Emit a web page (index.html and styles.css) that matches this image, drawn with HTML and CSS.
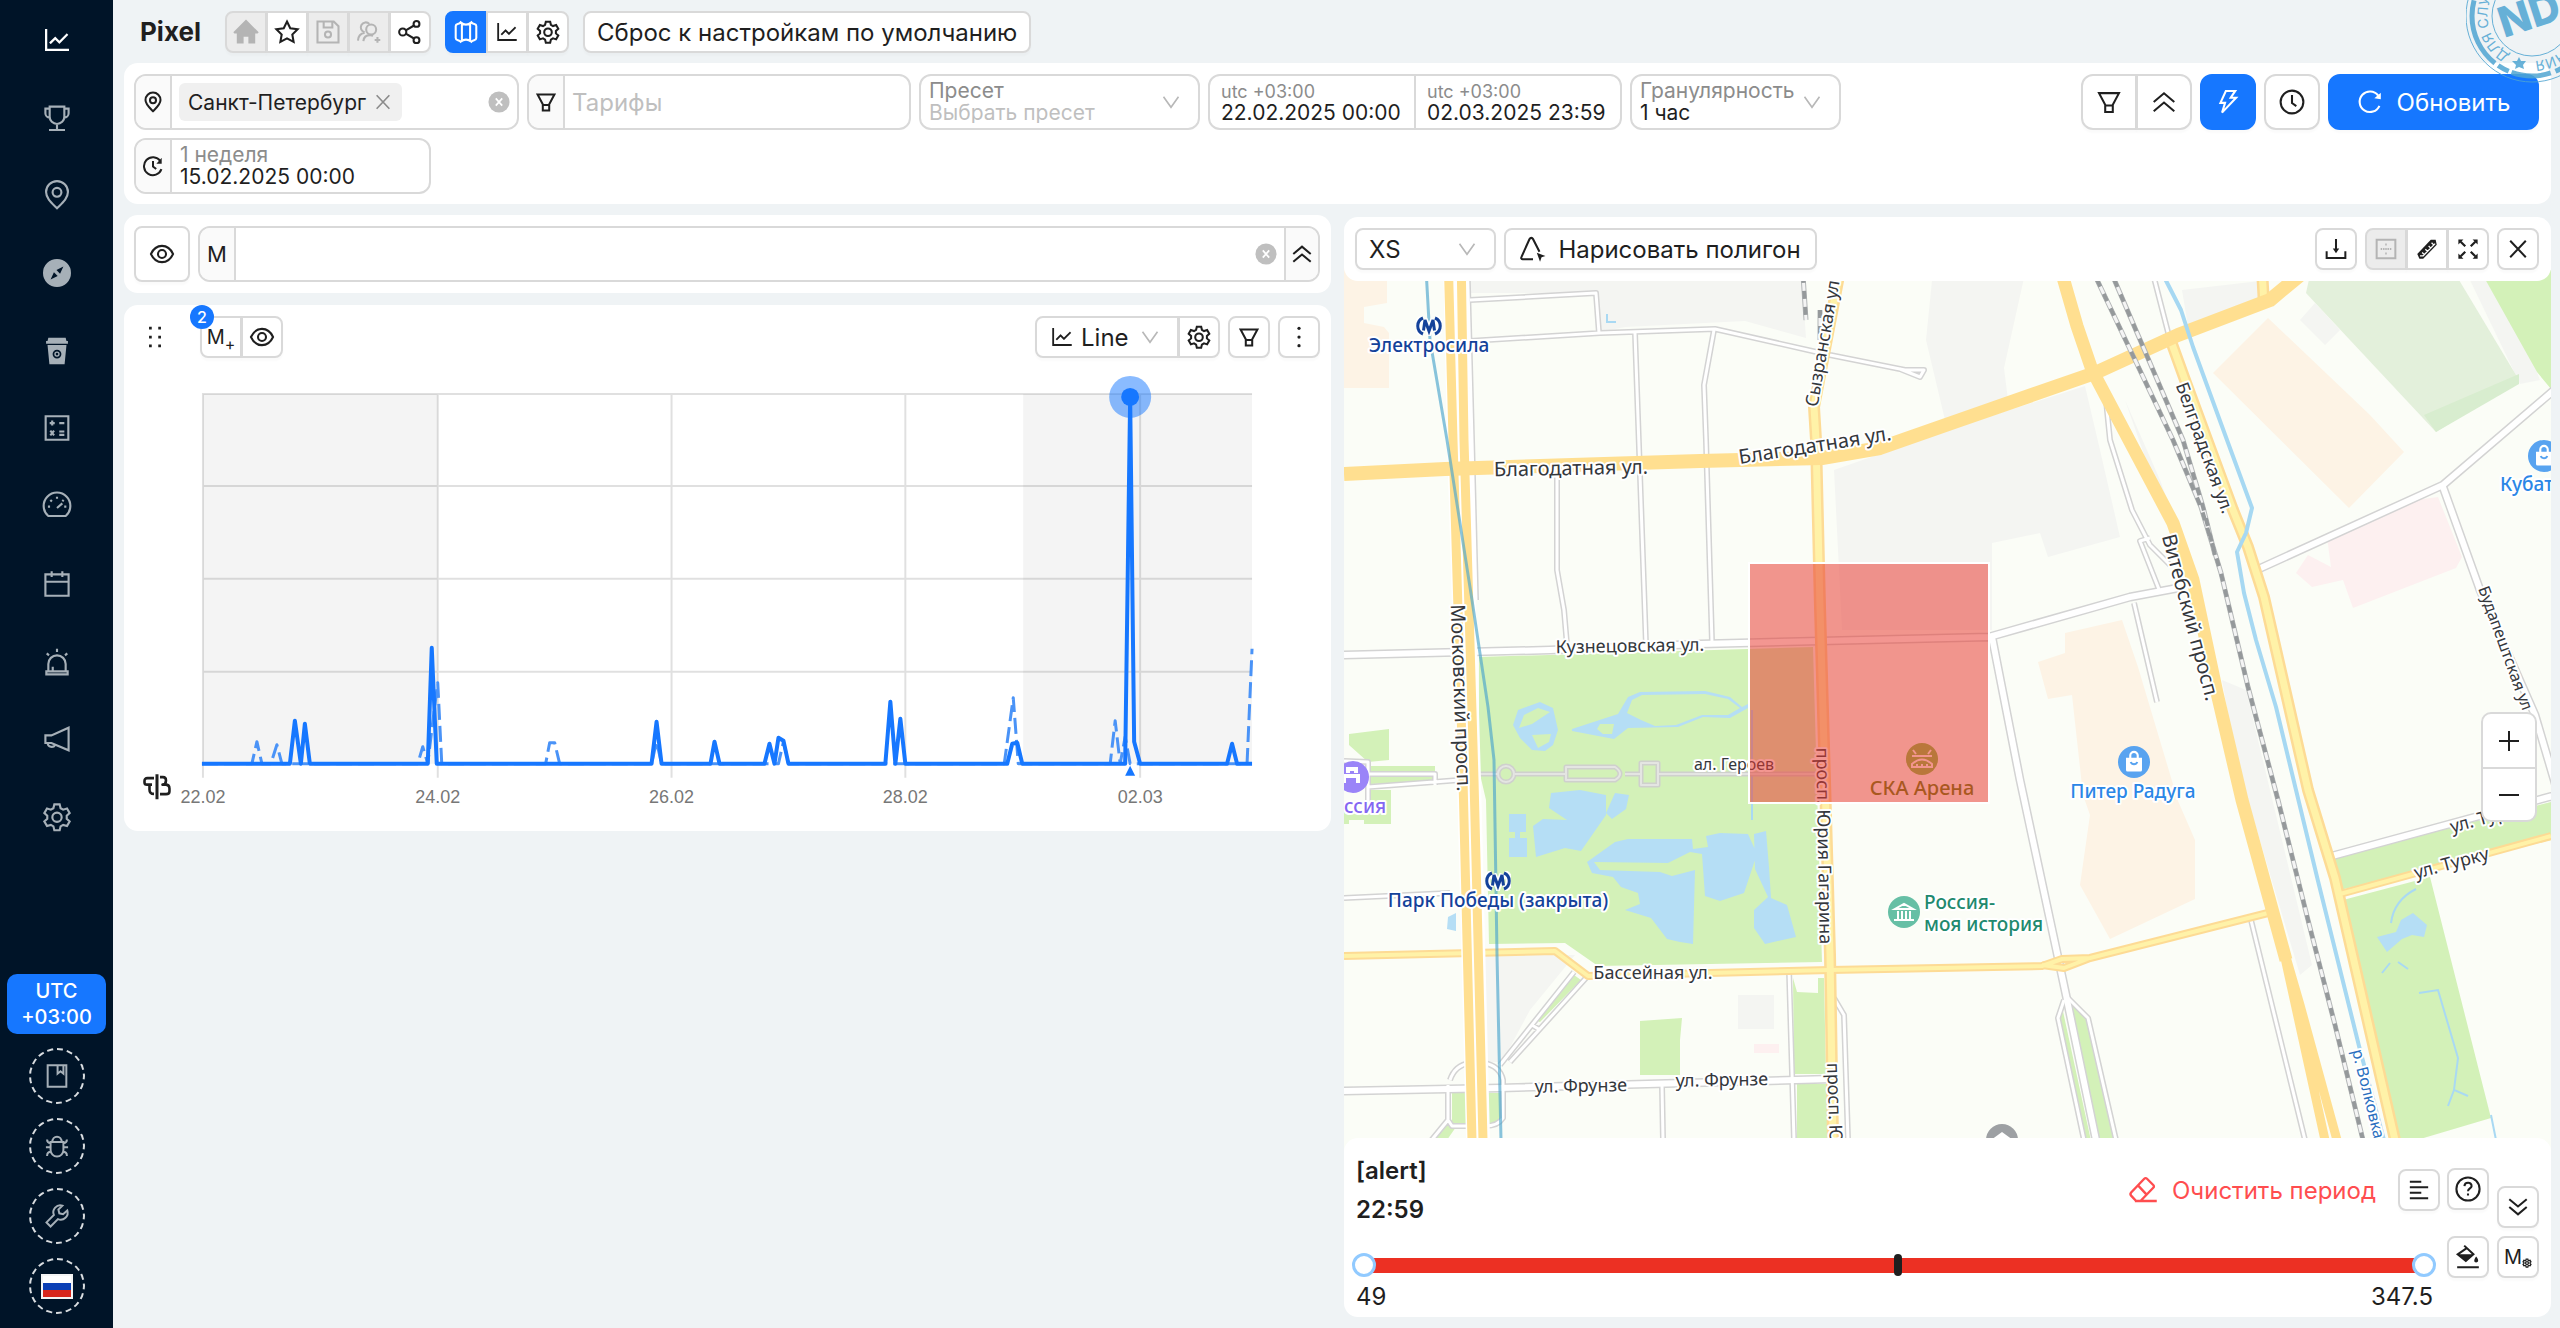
FILE: index.html
```html
<!DOCTYPE html>
<html lang="ru">
<head>
<meta charset="utf-8">
<meta name="viewport" content="width=device-width, initial-scale=1">
<title>Pixel</title>
<link rel="stylesheet" href="styles.css">
</head>
<body>
<svg class="sprite" aria-hidden="true">
  <symbol id="i-chart" viewBox="0 0 1024 1024"><path class="solid" d="M888 792H200V168c0-4.4-3.6-8-8-8h-56c-4.4 0-8 3.6-8 8v688c0 4.4 3.6 8 8 8h752c4.4 0 8-3.6 8-8v-56c0-4.4-3.6-8-8-8zM305.8 637.7c3.1 3.1 8.1 3.1 11.3 0l138.3-137.6L583 628.5c3.1 3.1 8.2 3.1 11.3 0l275.4-275.3c3.1-3.1 3.1-8.2 0-11.3l-39.6-39.6a8.03 8.03 0 00-11.3 0l-230 229.9L461.4 404a8.03 8.03 0 00-11.3 0L266.3 586.7a8.03 8.03 0 000 11.3l39.5 39.7z"/></symbol>
  <symbol id="i-trophy" viewBox="0 0 24 24"><path d="M6.5 3.5h11v7.5a5.500 5.500 0 0 1-11 0zM6.500 5H3.300v3.500a3.200 3.200 0 0 0 3.200 3.200M17.500 5h3.200v3.500a3.200 3.200 0 0 1-3.200 3.200M12 16.500v4M6 21h12"/></symbol>
  <symbol id="i-pin" viewBox="0 0 24 24"><path d="M12 22C8 18 3.800 14.500 3.800 9.800a8.200 8.200 0 0 1 16.400 0C20.200 14.500 16 18 12 22z"/><circle cx="12" cy="10" r="3.300"/></symbol>
  <symbol id="i-compass" viewBox="0 0 24 24"><path class="solid" fill-rule="evenodd" d="M12 1.500a10.500 10.500 0 1 0 0 21 10.500 10.500 0 0 0 0-21zM16.800 7.200l-2.500 5.300-2.700-2.700zM7.200 16.800l2.500-5.300 2.800 2.700z"/></symbol>
  <symbol id="i-cup" viewBox="0 0 24 24"><path class="solid" fill-rule="evenodd" d="M5.500 2h13l.6 2.500h1.100v2H3.800v-2h1.100zM4.900 7.500h14.200L17.700 22H6.300zM12 11a3.300 3.300 0 1 0 0 6.600 3.300 3.300 0 0 0 0-6.600z"/><circle cx="12" cy="14.300" r="1.500" stroke-width="1"/></symbol>
  <symbol id="i-calc" viewBox="0 0 24 24"><path d="M3.500 3.200h17v17.600h-17zM6.500 8.300h3.800M8.400 6.400v3.800M13.700 8.300h3.800M7 14l2.800 3.600M9.800 14L7 17.600M13.700 14.600h3.800M13.700 17.200h3.800"/></symbol>
  <symbol id="i-gauge" viewBox="0 0 24 24"><path d="M5.500 19.500a10 10 0 1 1 13 0z"/><path d="M12 13.500l4-3.500M12 5v1.600M5.200 12.500h1.600M17.400 12.500H19M7 7.500l1.200 1.200M17 7.500l-1 1"/></symbol>
  <symbol id="i-calendar" viewBox="0 0 24 24"><path d="M3.300 4.800h17.400v16H3.300zM3.300 10.300h17.400M8 2.500v4.300M16 2.500v4.300"/></symbol>
  <symbol id="i-alarm" viewBox="0 0 24 24"><path d="M5.500 19v-5.500a6.500 6.500 0 0 1 13 0V19M4 19h16v2.300H4zM8.800 15.500v3M12 2v2.500M4.300 5.500L6 7M19.700 5.500L18 7"/></symbol>
  <symbol id="i-mega" viewBox="0 0 24 24"><path d="M3.300 9.300h4.500L20.700 3.500v17L7.800 15H3.300zM5 15.200a3 3 0 0 0 5.600 1.200"/></symbol>
  <symbol id="i-gear" viewBox="0 0 24 24"><path d="M10 2.500h4l.7 2.900 1.900 1.100 2.900-.9 2 3.500-2.200 2v2.200l2.200 2-2 3.500-2.900-.9-1.900 1.100-.7 2.900h-4l-.7-2.900-1.900-1.100-2.900.9-2-3.500 2.200-2v-2.200l-2.200-2 2-3.500 2.900.9 1.900-1.100z"/><circle cx="12" cy="12.200" r="3.500"/></symbol>
  <symbol id="i-book" viewBox="0 0 24 24"><path d="M4 2.800h16v18.400H4zM12.500 3v7l2.500-2 2.500 2V3"/></symbol>
  <symbol id="i-bug" viewBox="0 0 24 24"><path d="M6.500 8.500h11v7a5.500 5.500 0 0 1-11 0zM8 8.500a4 4.500 0 0 1 8 0M2.500 13h4M17.500 13h4M3.500 6.500c0 2 1 3 3 3.200M20.500 6.500c0 2-1 3-3 3.200M3.500 20.500c0-2 1-3.500 3.500-3.500M20.500 20.500c0-2-1-3.500-3.500-3.500"/></symbol>
  <symbol id="i-wrench" viewBox="0 0 24 24"><path d="M20.800 7.200l-3.600 3.300-3.200-.8-.8-3.200 3.400-3.400a6 6 0 0 0-7.300 8L3 17.500 6.500 21l6.300-6.300a6 6 0 0 0 8-7.500z"/></symbol>
  <symbol id="i-home" viewBox="0 0 24 24"><path class="solid" d="M12 .5l11.700 11.800-1 1h-2.200V22.500H14.200v-6.200H9.800v6.200H3.500v-9.200H1.300l-1-1z"/></symbol>
  <symbol id="i-star" viewBox="0 0 24 24"><path d="M12 2.300l3 6.200 6.800 1-4.900 4.800 1.200 6.800-6.100-3.200-6.100 3.200 1.200-6.800-4.900-4.800 6.800-1z"/></symbol>
  <symbol id="i-save" viewBox="0 0 24 24"><path d="M2.300 2.300h15l4.400 4.400v15H2.300zM8 2.500v5.300h8V2.500"/><circle cx="12" cy="14.300" r="2.800"/></symbol>
  <symbol id="i-useradd" viewBox="0 0 24 24"><path d="M8 12.200a4.600 4.600 0 1 1 4.300-7.700M1.800 20c.2-3.800 2.400-6.700 6.200-7.300M6.800 20.500c.3-3.500 2.700-5.600 6.200-5.600a6 6 0 0 1 2.800.6M17.200 19.300h5.200M19.800 16.700v5.200"/><circle cx="14" cy="9.700" r="4.600"/></symbol>
  <symbol id="i-share" viewBox="0 0 24 24"><circle cx="5.300" cy="12" r="3.300"/><circle cx="18" cy="4.500" r="2.700"/><circle cx="18" cy="19.500" r="2.700"/><path d="M8.100 10.400l7.600-4.400M8.100 13.600l7.600 4.400"/></symbol>
  <symbol id="i-map" viewBox="0 0 24 24"><path d="M2.500 6.500C2.500 4 5.500 5.500 7 3q5 4.500 10 0c1.500 2.500 4.500 1 4.500 3.500v11c0 2.500-3 1.500-4.500 3.500q-5-4-10 0c-1.500-2-4.500-1-4.500-3.500zM8.200 4v15.500M15.800 4v15.500"/></symbol>
  <symbol id="i-funnel" viewBox="0 0 24 24"><path d="M2.800 3.800h18.400L15.500 14.500v6.700h-7v-6.700zM8.500 15.300h7"/></symbol>
  <symbol id="i-chev" viewBox="0 0 24 24"><path d="M2 5l10 14L22 5"/></symbol>
  <symbol id="i-up2" viewBox="0 0 24 24"><path d="M2.500 12L12 4 21.500 12M2.500 20.500L12 12.500l9.500 8"/></symbol>
  <symbol id="i-down2" viewBox="0 0 24 24"><path d="M2.500 3.500L12 11.500l9.500-8M2.500 12L12 20l9.500-8"/></symbol>
  <symbol id="i-bolt" viewBox="0 0 24 24"><path d="M10 1.800h8.700l-4.200 6.200h5L6.500 21.800l2.800-9H5z"/></symbol>
  <symbol id="i-clock" viewBox="0 0 24 24"><circle cx="12" cy="12" r="10.500"/><path d="M12 5.500v7.500l4 2.800"/></symbol>
  <symbol id="i-history" viewBox="0 0 24 24"><path d="M20 6.500a9.800 9.800 0 1 0 1.200 9M12 6.500v6l3.500 2.800"/><path class="solid" d="M21.500 3v6.500h-5.800z"/></symbol>
  <symbol id="i-reload" viewBox="0 0 24 24"><path d="M19.500 6a9.500 9.500 0 1 0 1.200 9.500"/><path class="solid" d="M22 3.500v6l-6-1z"/></symbol>
  <symbol id="i-eye" viewBox="0 0 24 24"><path d="M1.800 12C4 7.200 7.500 4.500 12 4.500S20 7.200 22.200 12C20 16.800 16.500 19.500 12 19.500S4 16.800 1.800 12z"/><circle cx="12" cy="12" r="3.700"/></symbol>
  <symbol id="i-x" viewBox="0 0 24 24"><path d="M3.500 3l17 18M20.500 3l-17 18"/></symbol>
  <symbol id="i-clear" viewBox="0 0 24 24"><circle class="solid" cx="12" cy="12" r="11.500"/><path class="inv" d="M8.500 8l7 8M15.500 8l-7 8"/></symbol>
  <symbol id="i-drag" viewBox="0 0 24 24"><path class="solid" d="M6.500 2.500h2.500V5H6.500zM15 2.500h2.500V5H15zM6.500 10.800h2.500v2.500H6.500zM15 10.800h2.500v2.500H15zM6.500 19h2.500v2.500H6.500zM15 19h2.500v2.500H15z"/></symbol>
  <symbol id="i-more" viewBox="0 0 24 24"><circle class="solid" cx="12" cy="4" r="1.500"/><circle class="solid" cx="12" cy="12" r="1.500"/><circle class="solid" cx="12" cy="20" r="1.500"/></symbol>
  <symbol id="i-poly" viewBox="0 0 24 24"><path d="M12 21.500H2.500c-1.200 0-1.700-1-1.200-2L8.800 2.800c.8-1.400 2.500-1.400 3.200 0L18 14.500"/><path class="solid" d="M15.500 15.500l8 3-3.600 1.200-1.400 4z"/></symbol>
  <symbol id="i-download" viewBox="0 0 24 24"><path d="M12 1v14M1.800 14.500v7.200h20.400v-7.200"/><path class="solid" d="M8.500 11.500h7L12 16.500z"/></symbol>
  <symbol id="i-grid" viewBox="0 0 24 24"><path d="M1.800 1.800h20.400v20.400H1.800z"/><path d="M11.200 7h1.600M6.200 12h1.600M8.800 12h1.600M11.200 12h1.600M13.600 12h1.600M16.200 12h1.600M11.200 17h1.600"/></symbol>
  <symbol id="i-ruler" viewBox="0 0 24 24"><path class="solid" d="M3 16.500L15.500 3.500h4.500l1 4.500L8.500 21H5z"/><path class="inv" stroke-width="1.200" d="M9.500 17.200l-2-2M12.500 14.200l-2-2M15.500 11.200l-2-2M18.200 8.200l-2-2M5.500 18.300h3L19.500 7"/></symbol>
  <symbol id="i-full" viewBox="0 0 24 24"><path stroke-width="2.400" d="M4 4l5 5M20 4l-5 5M4 20l5-5M20 20l-5-5"/><path class="solid" d="M1.500 1.500H7l-5.500 5.500zM22.500 1.500V7L17 1.500zM1.500 22.500V17L7 22.500zM22.500 22.500H17l5.500-5.500z"/></symbol>
  <symbol id="i-eraser" viewBox="0 0 24 24"><path d="M6.500 20.800l-4-4.300c-.7-.8-.7-1.700 0-2.500L13 3c.7-.7 1.500-.7 2.200 0l5 5c.7.700.7 1.500 0 2.200L10 20.800M8.200 8.500l6.500 7M5.500 20.800H23"/></symbol>
  <symbol id="i-align" viewBox="0 0 24 24"><path d="M2 3h12.500M2 9h20M2 15h12.500M2 21h20"/></symbol>
  <symbol id="i-help" viewBox="0 0 24 24"><circle cx="12" cy="12" r="10.700"/><path d="M8.700 9.300c.3-4.300 6.800-3.900 6.600 0-.1 2-3.300 2.300-3.300 4.700M12 16.200v1.800"/></symbol>
  <symbol id="i-bucket" viewBox="0 0 24 24"><path d="M8.500 1.500L17 9.500 10 15.500 2.500 9.500 10.500 4M2 21.500h20"/><path class="solid" d="M3 9.500h14L10 16zM19.500 11.500c3 3.500 2 5.500 0 5.500s-2.500-2 0-5.500z"/></symbol>
  <symbol id="i-brain" viewBox="0 0 28 28"><path stroke-width="3" d="M14 1.500v25"/><path stroke-width="2.600" d="M11 5.500H4.500c-2 0-3 1.200-3 2.800v1.500c0 1.500 1.200 2.200 2.500 2.200h5M6.500 12v5c0 2.500 1.500 4.200 4.500 4.200M17 4.500h3c2.200 0 3 1.500 3 3.300 0 2.200-1.500 4-3.500 4.200h3c2.500 0 4 1.500 4 4v2.500c0 2-1.500 3-3.500 3h-6"/></symbol>
  <symbol id="i-bag" viewBox="0 0 30 30"><circle class="solid" cx="15" cy="15" r="15"/><path fill="#fff" stroke="none" d="M7.500 11h15v11.500a1.500 1.500 0 0 1-1.500 1.500H9a1.500 1.500 0 0 1-1.500-1.500z"/><path stroke="#fff" d="M11.500 11.500V9a3.500 3.500 0 0 1 7 0v2.500"/><path d="M12 15a3.200 3.200 0 0 0 6 0"/></symbol>
  <symbol id="i-metro" viewBox="0 0 26 20"><path stroke="#fff" stroke-width="7" d="M7 2C0 5 0 15 7 18M19 2c7 3 7 13 0 16M8 3l5 12 5-12"/><path stroke-width="3" d="M7 2C0 5 0 15 7 18M19 2c7 3 7 13 0 16M7.500 14.500L9 4l4 11 4-11 1.500 10.500"/></symbol>
</svg>

<div class="app">
  <aside class="side">
    <nav class="side-nav" aria-label="Разделы">
      <a href="#" class="on" aria-label="Графики"><svg class="ic"><use href="#i-chart"/></svg></a>
      <a href="#" aria-label="Рейтинг"><svg class="ic"><use href="#i-trophy"/></svg></a>
      <a href="#" aria-label="Места"><svg class="ic"><use href="#i-pin"/></svg></a>
      <a href="#" aria-label="Компас"><svg class="ic"><use href="#i-compass"/></svg></a>
      <a href="#" aria-label="Кофе"><svg class="ic"><use href="#i-cup"/></svg></a>
      <a href="#" aria-label="Калькулятор"><svg class="ic"><use href="#i-calc"/></svg></a>
      <a href="#" aria-label="Показатели"><svg class="ic"><use href="#i-gauge"/></svg></a>
      <a href="#" aria-label="Календарь"><svg class="ic"><use href="#i-calendar"/></svg></a>
      <a href="#" aria-label="Тревоги"><svg class="ic"><use href="#i-alarm"/></svg></a>
      <a href="#" aria-label="Объявления"><svg class="ic"><use href="#i-mega"/></svg></a>
      <a href="#" aria-label="Настройки"><svg class="ic"><use href="#i-gear"/></svg></a>
    </nav>
    <div class="side-foot">
      <button class="utc">UTC<br>+03:00</button>
      <button class="round" aria-label="Документация"><svg class="ic"><use href="#i-book"/></svg></button>
      <button class="round" aria-label="Ошибка"><svg class="ic"><use href="#i-bug"/></svg></button>
      <button class="round" aria-label="Инструменты"><svg class="ic"><use href="#i-wrench"/></svg></button>
      <button class="round" aria-label="Русский"><span class="flag"></span></button>
    </div>
  </aside>

  <main class="main">
    <header class="top">
      <h1>Pixel</h1>
      <div class="group">
        <button class="btn" disabled aria-label="Домой"><svg class="ic"><use href="#i-home"/></svg></button>
        <button class="btn" aria-label="Избранное"><svg class="ic"><use href="#i-star"/></svg></button>
        <button class="btn" disabled aria-label="Сохранить"><svg class="ic"><use href="#i-save"/></svg></button>
        <button class="btn" disabled aria-label="Добавить людей"><svg class="ic"><use href="#i-useradd"/></svg></button>
        <button class="btn" aria-label="Поделиться"><svg class="ic"><use href="#i-share"/></svg></button>
      </div>
      <div class="group">
        <button class="btn primary" aria-label="Карта"><svg class="ic"><use href="#i-map"/></svg></button>
        <button class="btn" aria-label="График"><svg class="ic"><use href="#i-chart"/></svg></button>
        <button class="btn" aria-label="Настройки"><svg class="ic"><use href="#i-gear"/></svg></button>
      </div>
      <button class="btn text">Сброс к настройкам по умолчанию</button>
    </header>

    <section class="card filters">
      <div class="fields">
        <div class="field w-city">
          <span class="pre"><svg class="ic sm"><use href="#i-pin"/></svg></span>
          <span class="tag">Санкт-Петербург<button class="bare" aria-label="Убрать"><svg class="ic xs"><use href="#i-x"/></svg></button></span>
          <button class="bare clear" aria-label="Очистить"><svg class="ic"><use href="#i-clear"/></svg></button>
        </div>
        <div class="field w-tariff">
          <span class="pre"><svg class="ic sm"><use href="#i-funnel"/></svg></span>
          <input class="one" type="text" placeholder="Тарифы" aria-label="Тарифы">
        </div>
        <div class="field w-preset">
          <label class="two"><span class="lab">Пресет</span><select class="ph"><option>Выбрать пресет</option></select></label>
          <svg class="ic xs chev"><use href="#i-chev"/></svg>
        </div>
        <div class="field w-dates">
          <label class="two"><span class="lab small">utc +03:00</span><input type="text" value="22.02.2025 00:00"></label>
          <label class="two"><span class="lab small">utc +03:00</span><input type="text" value="02.03.2025 23:59"></label>
        </div>
        <div class="field w-gran">
          <label class="two"><span class="lab">Гранулярность</span><select><option>1 час</option></select></label>
          <svg class="ic xs chev"><use href="#i-chev"/></svg>
        </div>
        <div class="field w-week">
          <span class="pre"><svg class="ic sm"><use href="#i-history"/></svg></span>
          <label class="two"><span class="lab">1 неделя</span><input type="text" value="15.02.2025 00:00"></label>
        </div>
      </div>
      <div class="actions">
        <div class="group">
          <button class="btn big" aria-label="Фильтр"><svg class="ic"><use href="#i-funnel"/></svg></button>
          <button class="btn big" aria-label="Свернуть"><svg class="ic"><use href="#i-up2"/></svg></button>
        </div>
        <button class="btn big primary" aria-label="Быстро"><svg class="ic"><use href="#i-bolt"/></svg></button>
        <button class="btn big" aria-label="Время"><svg class="ic"><use href="#i-clock"/></svg></button>
        <button class="btn big primary refresh"><svg class="ic"><use href="#i-reload"/></svg>Обновить</button>
      </div>
    </section>

    <div class="cols">
      <div class="col">
        <section class="card metric">
          <button class="btn big" aria-label="Показать"><svg class="ic"><use href="#i-eye"/></svg></button>
          <div class="field grow">
            <label class="pre" for="metric">М</label>
            <input class="one" id="metric" type="text">
            <button class="bare clear" aria-label="Очистить"><svg class="ic"><use href="#i-clear"/></svg></button>
            <button class="post" aria-label="Свернуть"><svg class="ic sm"><use href="#i-up2"/></svg></button>
          </div>
        </section>

        <section class="card plot">
          <div class="plot-head">
            <button class="bare drag" aria-label="Переместить"><svg class="ic"><use href="#i-drag"/></svg></button>
            <div class="group badged">
              <button class="btn mtext">M<sub>+</sub></button>
              <button class="btn" aria-label="Показать"><svg class="ic"><use href="#i-eye"/></svg></button>
              <span class="badge">2</span>
            </div>
            <div class="group push">
              <div class="btn pick">
                <svg class="ic"><use href="#i-chart"/></svg>
                <select aria-label="Тип графика"><option>Line</option></select>
                <svg class="ic xs chev"><use href="#i-chev"/></svg>
              </div>
              <button class="btn" aria-label="Настройки"><svg class="ic"><use href="#i-gear"/></svg></button>
            </div>
            <button class="btn" aria-label="Фильтр"><svg class="ic sm"><use href="#i-funnel"/></svg></button>
            <button class="btn" aria-label="Ещё"><svg class="ic"><use href="#i-more"/></svg></button>
          </div>
          <svg class="chart" viewBox="134 366 1187 454" role="img" aria-label="График">
            <path fill="#f4f4f4" d="M203 394h235v370H203zM1024 394h229v370h-229z"/>
            <path class="gridline" d="M202 394h1051M202 486h1051M202 579h1051M202 672h1051M203 393v385M438 393v385M672 393v385M906 393v385M1141 393v385"/>
            <path class="prev" d="M202 764H252L257 742L262 764H271L277 745L282 764H418L423 747L428 764L433 722L438 683L442 764H546L550 743L555 743L560 764H652L657 742L662 764H779L784 742L789 764H1005L1014 698L1019 764H1111L1116 721L1121 764L1126 737L1131 764H1248L1253 649"/>
            <path class="cur" d="M202 764H290L295 721L301 764L305 724L310 764H428L432 648L437 764H652L657 722L662 764H711L715 742L720 764H765L770 744L775 764L779 738L784 741L789 764H886L891 702L896 764L901 719L906 764H1008L1013 744L1018 743L1023 764H1126L1131 397L1135 742L1141 764H1228L1233 744L1238 764H1253"/>
            <circle cx="1131" cy="397" r="21" fill="#1677ff" opacity=".5"/>
            <circle cx="1131" cy="397" r="9" fill="#1677ff"/>
            <path fill="#1677ff" d="M1131 766l5 10h-10z"/>
            <g class="ticks">
              <text x="203" y="803">22.02</text><text x="438" y="803">24.02</text><text x="672" y="803">26.02</text><text x="906" y="803">28.02</text><text x="1141" y="803">02.03</text>
            </g>
            <use href="#i-brain" x="143" y="773" width="28" height="28" class="glyph"/>
          </svg>
        </section>
      </div>

      <section class="map">
        <svg class="map-art" viewBox="1344 251 1207 920" preserveAspectRatio="xMidYMid slice" role="img" aria-label="Карта">
          <defs>
            <path id="st" d="M1467 251L1472 440L1476 600M1470 300L1596 293L1599 333M1470 341L1600 333L1715 329L1830 355L1905 370L1924 370L1920 377L1900 369M1557 475V570L1564 610L1567 645M1635 333L1646 645M1714 330L1704 385L1706 440L1712 642M2106 400L2110 440L2132 510L2150 545L2170 565M2150 538L2140 541L2160 592M2134 603L2157 702M2064 1000L2058 1018L2084 1140M2068 998L2088 1018L2116 1140M2251 920L2305 1140M2152 270L2170 340M1662 1085L1663 1140M1789 970L1794 1140M1834 998L1844 1015L1848 1140M1574 972L1500 1065M1586 978L1510 1062M1532 1025L1540 1030M1450 1080Q1455 1065 1470 1063M1484 1063Q1500 1066 1503 1080V1118Q1498 1126 1485 1126H1452L1448 1120V1085M1430 1142L1448 1120M1344 761L1368 762V787L1460 780M1368 784V810M1344 898L1450 893M1368 774H1435V785"/>
            <path id="st2" d="M1344 655L1550 650L1700 644L1989 637L2130 597L2178 588M1992 637L2020 780L2059 962L2066 995L2096 1140M2252 572L2443 485L2560 385M2443 487L2480 590L2535 715L2560 800M2332 856L2560 794M1344 1091L1500 1088L1832 1079"/>
            <path id="alley" d="M1470 774H1498M1515 774H1566M1566 767H1615Q1625 774 1615 780H1566zM1625 774H1640M1641 763h17v22h-17zM1658 774H1815M1506 766a8 8 0 1 1 0 16 8 8 0 1 1 0-16"/>
            <path id="y1" d="M1842 260L1814 407L1816 440L1820 607L1830 955L1833 1140M2168 333L2185 380L2233 510L2248 547L2264 597L2308 790L2335 878L2395 1140M2261 251L2264 305"/>
            <path id="y2" d="M1344 956L1555 951L1588 976L1830 970L2042 966L2062 959L2090 958L2272 912M2042 965L2064 968L2090 958M2340 894L2551 836"/>
            <path id="rail" d="M2090 265L2173 440L2201 507L2221 573L2248 687L2278 800L2308 920L2335 1025L2363 1140M2108 265L2183 440L2203 507L2215 555M1803 275L1806 320M1820 310V340"/>
          </defs>
          <path fill="#fbfdf7" d="M1300 200h1300v1000H1300z"/>
          <g fill="#f4f5f2">
            <path d="M1470 251H1800L1806 338L1745 321L1625 327L1600 332L1597 293H1470zM1935 251H2030L2004 368L2008 400L1945 420L1926 340zM1834 470L1960 426L2085 386L2100 450L2120 537L2048 557L2040 533L1992 543V630H1842zM1480 955H1575L1530 1010L1502 1062H1485zM2182 290L2260 281V305L2190 338zM2300 320L2315 303L2340 330L2325 345zM1738 995h36v34h-36zM2222 680L2246 690L2312 965L2300 975L2236 760zM2125 400L2160 480L2200 590L2195 600z"/>
            <path d="M2456 251H2490L2540 380L2520 384z"/>
          </g>
          <path fill="#fdf3e5" d="M1340 251h47v52l-23 4v16l20 4 5 6v55h-49zM2268 318L2213 373L2349 508L2404 452L2370 415zM2065 633L2122 620L2138 667L2178 801L2195 840V899L2110 939L2080 885L2090 815L2083 795L2072 695L2048 699L2038 662L2065 653z"/>
          <path fill="#e3f0db" d="M2310 275H2456L2519 380L2436 432L2306 293z"/>
          <path fill="#d8edcf" d="M2519 374V384L2436 432L2424 415z"/>
          <path fill="#fdf0f0" d="M2327 537L2414 500L2438 497L2462 557L2456 568L2353 608L2343 580L2312 587L2296 573L2308 555L2331 567zM1754 1044h25v9h-25z"/>
          <g fill="#d3f1b8">
            <path d="M2480 270H2560V400L2537 372zM1479 657L1813 647L1822 962L1598 966L1565 943L1489 944L1486 800L1479 770zM1349 734L1389 729V760L1368 762L1349 745zM1371 766H1435V782L1371 784zM1344 824h5v-4h15v4h27v-34h-20v20h-27zM1640 1021L1682 1018L1680 1040V1075H1640zM1793 978L1797 992L1818 993V978H1824L1826 1074H1794zM1797 1084H1828V1138H1797zM1581 980L1540 1022L1535 1020L1574 975zM1452 1093H1501V1120L1490 1124H1452zM1425 1150L1446 1122L1456 1127L1440 1150z"/>
            <path d="M2331 858L2551 802V840L2340 890zM2343 900L2430 877L2491 1118L2400 1145zM2061 1002L2058 1017L2088 1150H2093zM2071 1000L2088 1018L2118 1150H2101z"/>
          </g>
          <g fill="#b5def5">
            <path d="M1551 793L1580 790L1606 795V815L1581 851L1565 848L1536 857L1533 826L1543 819L1567 820L1549 808zM1615 793L1629 795L1626 809L1612 819L1606 813zM1509 814h17v18h-17zM1509 838h18v19h-18zM1515 832h5v6h-5zM1587 862L1615 842L1628 839H1692L1693 849L1708 847L1706 836L1720 833L1748 834L1757 854L1744 893L1720 901L1705 896L1702 854L1690 852L1668 863L1594 862L1600 870L1660 872L1672 876L1695 870L1693 944L1680 942L1667 939L1651 918L1625 910L1640 904L1638 893L1621 887L1613 877L1592 873zM1754 834L1766 831L1769 867L1771 898L1787 905L1796 937L1765 944L1754 928V910L1768 897L1755 869zM1448 917L1456 913V931L1447 929zM2377 937L2396 932L2401 920L2413 913L2427 925L2424 937L2412 935L2402 939L2387 952z"/>
            <path fill-rule="evenodd" d="M1540 702L1553 708L1558 730L1553 745L1545 751L1532 750L1520 738L1513 725L1518 710zM1538 708L1524 715L1519 728L1532 724L1550 712zM1532 735L1538 748L1549 742L1551 734zM1572 729L1618 714L1628 697L1640 692L1705 691L1730 697L1742 707L1748 704V708L1730 718L1703 717L1678 727L1628 728L1614 739L1572 731zM1627 713L1641 720L1655 726L1676 725L1702 715L1728 715L1740 708L1728 699L1705 694L1642 695L1632 700zM1597 729L1603 734L1612 734L1614 724L1600 724z"/>
            <path fill="none" stroke="#a9d9f3" stroke-width="2" d="M1607 314v8h9M1752 710v110M2391 923Q2394 900 2416 889M2382 973l8-10M2398 962l10 7M2419 993L2438 990L2458 1058L2454 1090L2468 1096M2454 1090L2448 1106M2491 1115L2496 1140"/>
          </g>

          <!-- minor streets: grey casing under a white fill -->
          <g class="roads">
            <g class="casing"><use href="#st" stroke-width="6"/><use href="#st2" stroke-width="9"/></g>
            <use href="#alley" stroke="#cfd0cd" stroke-width="5"/>
            <g stroke="#fff"><use href="#st" stroke-width="3"/><use href="#st2" stroke-width="6"/></g>
            <use href="#alley" stroke="#e4e5e2" stroke-width="2"/>
          </g>
          <!-- yellow streets -->
          <g class="roads">
            <g stroke="#fddb95"><use href="#y1" stroke-width="12"/><use href="#y2" stroke-width="8"/></g>
            <g stroke="#fff2a8"><use href="#y1" stroke-width="7"/><use href="#y2" stroke-width="4"/></g>
          </g>
          <!-- avenues -->
          <g class="roads" stroke="#ffdf90">
            <path stroke="#fff" stroke-width="24" d="M1455 260L1459 440L1469 780L1478 1140"/>
            <path stroke-width="9" d="M1448 251L1453 440L1463 780L1472 1140M1461 251L1464 440L1474 780L1483 1140"/>
            <path stroke-width="14" d="M1344 474L1445 469L1700 461L1822 458L1880 448L1960 420L2095 373L2178 335L2270 300L2300 275"/>
            <path stroke-width="13" d="M2058 260L2077 326L2092 370L2129 440L2173 523L2193 580L2217 693L2242 800L2272 909L2286 960"/>
            <path stroke-width="9" d="M2280 935L2325 1140M2284 950L2300 1005L2337 1140"/>
          </g>
          <!-- rail, river and metro line -->
          <g class="roads">
            <path stroke="#a6d8f2" stroke-width="4" d="M2158 265L2181 310L2193 347L2227 440L2252 508L2246 533L2237 552L2244 593L2256 640L2276 707L2296 790L2318 881L2359 1046L2384 1140"/>
            <use href="#rail" stroke="#b4b7b8" stroke-width="5"/>
            <use href="#rail" stroke="#f4f4f4" stroke-width="3"/>
            <use href="#rail" stroke="#95999b" stroke-width="4" stroke-dasharray="8 8"/>
            <path stroke="#4aa5cc" stroke-width="3" opacity=".65" d="M1425 251L1430 340L1447 440L1472 600L1488 707L1494 760L1497 955L1501 1140"/>
          </g>

          <!-- points of interest -->
          <use href="#i-metro" x="1416" y="316" width="26" height="20" class="poi navy"/>
          <use href="#i-metro" x="1485" y="871" width="26" height="20" class="poi navy"/>
          <use href="#i-bag" x="2118" y="746" width="32" height="32" class="poi blue"/>
          <use href="#i-bag" x="2528" y="440" width="32" height="32" class="poi blue"/>
          <circle cx="1353" cy="777" r="16" fill="#9a84f8"/>
          <path fill="none" stroke="#fff" stroke-width="4" d="M1344 783v-7h14v7M1348 773v-4h8v4"/>
          <circle cx="1904" cy="912" r="16" fill="#66bfa5"/>
          <path fill="none" stroke="#fff" stroke-width="2" d="M1895 909h18l-9-5zM1898 911v8M1902 911v8M1906 911v8M1910 911v8M1894 920h20"/>
          <circle cx="2002" cy="1140" r="16" fill="#9da0a3"/>
          <path fill="#fff" d="M1991 1140l11-8 11 8z"/>

          <g class="labels">
            <text class="navy" x="1429" y="352">Электросила</text>
            <text class="navy" x="1498" y="907">Парк Победы (закрыта)</text>
            <text transform="translate(1571 475) rotate(-1)">Благодатная ул.</text>
            <text transform="translate(1816 452) rotate(-9)">Благодатная ул.</text>
            <text class="s18" transform="translate(1630 652) rotate(-1)">Кузнецовская ул.</text>
            <text class="s16" x="1734" y="770">ал. Героев</text>
            <text class="s18" x="1653" y="979">Бассейная ул.</text>
            <text class="s18" transform="translate(1581 1092) rotate(-1)">ул. Фрунзе</text>
            <text class="s18" transform="translate(1722 1086) rotate(-1)">ул. Фрунзе</text>
            <text transform="translate(1454 698) rotate(88)">Московский просп.</text>
            <text class="s18" transform="translate(1829 342) rotate(-80)">Сызранская ул.</text>
            <text class="s18" transform="translate(1818 846) rotate(89)">просп. Юрия Гагарина</text>
            <text class="s18 start" transform="translate(1827 1063) rotate(88)">просп. Ю</text>
            <text class="s18" transform="translate(2199 450) rotate(70)">Белградская ул.</text>
            <text transform="translate(2184 619) rotate(75)">Витебский просп.</text>
            <text class="s16" transform="translate(2501 652) rotate(70)">Будапештская ул.</text>
            <text class="s18" transform="translate(2453 869) rotate(-15)">ул. Турку</text>
            <text class="s18" transform="translate(2489 823) rotate(-15)">ул. Турку</text>
            <text class="s16 river" transform="translate(2363 1095) rotate(76)">р. Волковка</text>
            <text class="blue" x="2133" y="798">Питер Радуга</text>
            <text class="blue start" x="2500" y="491">Кубат</text>
            <text class="teal start" x="1924" y="909">Россия-</text>
            <text class="teal start" x="1924" y="931">моя история</text>
            <text class="violet start" x="1344" y="813">ссия</text>
          </g>
          <path fill="#e9382f" fill-opacity=".53" stroke="#fff" stroke-width="2" d="M1749 563h240v240h-240z"/>
          <circle cx="1922" cy="759" r="16" fill="#b9773a"/>
          <path fill="none" stroke="#f2958d" stroke-width="2" d="M1913 750l3 4M1931 750l-3 4M1912 756h20M1912 764q10-9 20 0v3h-20zM1917 767v-3M1922 767v-3M1927 767v-3"/>
          <text class="arena" x="1922" y="795">СКА Арена</text>
        </svg>

        <div class="map-bar">
          <div class="btn pick size">
            <select aria-label="Размер"><option>XS</option></select>
            <svg class="ic xs chev"><use href="#i-chev"/></svg>
          </div>
          <button class="btn text poly"><svg class="ic"><use href="#i-poly"/></svg>Нарисовать полигон</button>
          <button class="btn push" aria-label="Скачать"><svg class="ic sm"><use href="#i-download"/></svg></button>
          <div class="group">
            <button class="btn" disabled aria-label="Сетка"><svg class="ic sm"><use href="#i-grid"/></svg></button>
            <button class="btn" aria-label="Линейка"><svg class="ic"><use href="#i-ruler"/></svg></button>
            <button class="btn" aria-label="На весь экран"><svg class="ic sm"><use href="#i-full"/></svg></button>
          </div>
          <button class="btn" aria-label="Закрыть"><svg class="ic sm"><use href="#i-x"/></svg></button>
        </div>

        <div class="zoomer">
          <button aria-label="Приблизить"><svg class="ic"><path d="M12 2v20M2 12h20"/></svg></button>
          <button aria-label="Отдалить"><svg class="ic"><path d="M2 12h20"/></svg></button>
        </div>

        <div class="legend">
          <div class="legend-main">
            <div class="legend-head">
              <div class="legend-title">[alert]<br>22:59</div>
              <button class="wipe"><svg class="ic"><use href="#i-eraser"/></svg>Очистить период</button>
              <button class="btn" aria-label="Выравнивание"><svg class="ic sm"><use href="#i-align"/></svg></button>
            </div>
            <div class="range">
              <span class="tick"></span>
              <input type="range" min="49" max="347.5" step="0.5" value="49" aria-label="От">
              <input type="range" min="49" max="347.5" step="0.5" value="347.5" aria-label="До">
            </div>
            <div class="ends"><span>49</span><span>347.5</span></div>
          </div>
          <div class="legend-tools">
            <button class="btn" aria-label="Справка"><svg class="ic"><use href="#i-help"/></svg></button>
            <button class="btn low" aria-label="Свернуть"><svg class="ic sm"><use href="#i-down2"/></svg></button>
            <button class="btn" aria-label="Заливка"><svg class="ic"><use href="#i-bucket"/></svg></button>
            <button class="btn mtext" aria-label="Метрика">M<svg class="ic"><use href="#i-gear"/></svg></button>
          </div>
        </div>
      </section>
    </div>
  </main>

  <svg class="stamp" viewBox="0 0 94 84" aria-hidden="true">
    <g fill="none" stroke="#4fa5d2">
      <circle cx="66" cy="16" r="66" stroke-width="1"/>
      <circle cx="66" cy="16" r="60" stroke-width="5" stroke-dasharray="70 5 40 3 12 4"/>
      <circle cx="66" cy="16" r="40" stroke-width="1"/>
      <path id="ring" stroke="none" d="M44 55A45 45 0 1 1 69 61"/>
    </g>
    <g fill="#4fa5d2">
      <path d="M53 57l2 4 5 0-3 4 1 4-5-2-4 2 1-4-4-4h5z"/>
      <text class="ring"><textPath href="#ring">ДЛЯ СЛУЖЕБНОГО</textPath></text>
      <text class="ring end"><textPath href="#ring" startOffset="100%">ПОЛЬЗОВАНИЯ</textPath></text>
      <text class="nda" transform="translate(38 38) rotate(-18)">NDA</text>
    </g>
  </svg>
</div>
</body>
</html>
```
FILE: styles.css
```css
* { box-sizing: border-box; }

body {
  margin: 0;
  background: #eff3f5;
  color: #1f1f1f;
  font-family: Inter, "Liberation Sans", sans-serif;
  font-size: 24px;
}

button, input, select { font: inherit; color: inherit; }
button { cursor: pointer; }

.sprite { position: absolute; width: 0; height: 0; }

.ic {
  display: block;
  flex: none;
  width: 26px;
  height: 26px;
  fill: none;
  stroke: currentColor;
  stroke-width: 1.9;
}
.ic.sm { width: 22px; height: 22px; stroke-width: 2.2; }
.ic.xs { width: 18px; height: 18px; stroke-width: 2.2; }
.solid { fill: currentColor; stroke: none; }
.inv { stroke: #fff; }

.app {
  position: relative;
  display: grid;
  grid-template-columns: 113px minmax(0, 1fr);
  min-height: 100vh;
  overflow: hidden;
}

/* Sidebar */
.side {
  display: flex;
  flex-direction: column;
  justify-content: space-between;
  padding: 24px 7px 14px;
  background: #001428;
}
.side-nav {
  display: flex;
  flex-direction: column;
  align-items: center;
  justify-content: space-between;
  height: 809px;
}
.side-nav a { color: #a6b0b8; }
.side-nav a.on { color: #fff; }
.side-nav .ic { width: 32px; height: 32px; stroke-width: 1.6; }
.side-foot {
  display: flex;
  flex-direction: column;
  align-items: center;
  gap: 14px;
}
.utc {
  width: 100%;
  height: 60px;
  padding: 0;
  border: 0;
  border-radius: 10px;
  background: #1677ff;
  color: #fff;
  font-size: 20px;
  font-weight: 500;
  line-height: 26px;
}
.round {
  display: grid;
  place-items: center;
  width: 56px;
  height: 56px;
  padding: 0;
  border: 2px dashed #d9dde0;
  border-radius: 50%;
  background: none;
  color: #a6b0b8;
}
.round .ic { width: 28px; height: 28px; stroke-width: 1.7; }
.flag {
  width: 32px;
  height: 25px;
  border: 2px solid #f4f4f4;
  background: linear-gradient(#fff 33%, #0b3fb5 33% 66%, #d8261c 66%);
}

/* Page column */
.main {
  display: flex;
  flex-direction: column;
  padding: 11px 9px 11px 11px;
}
.top {
  display: flex;
  align-items: center;
  gap: 14px;
  padding: 0 16px 10px;
}
h1 {
  margin: 0 10px 0 0;
  font-size: 26px;
  font-weight: 700;
  line-height: 42px;
}

.card { border-radius: 14px; background: #fff; }

.btn {
  display: flex;
  align-items: center;
  justify-content: center;
  flex: none;
  width: 42px;
  height: 42px;
  padding: 0;
  border: 2px solid #d9d9d9;
  border-radius: 8px;
  background: #fff;
  color: #1f1f1f;
  box-shadow: 0 3px 2px rgba(0, 0, 0, .02);
}
.btn:disabled { background: #ececec; color: #b4b4b4; }
.btn.primary { border-color: #1677ff; background: #1677ff; color: #fff; }
.btn.text { width: auto; padding: 0 12px; }
.btn.big { width: 56px; height: 56px; border-radius: 12px; }
.push { margin-left: auto; }

.group { display: flex; }
.group > .btn:not(:first-child) {
  margin-left: -1px;
  border-top-left-radius: 0;
  border-bottom-left-radius: 0;
}
.group > .btn:not(:last-of-type) {
  border-top-right-radius: 0;
  border-bottom-right-radius: 0;
}
.group > .pick:first-child {
  border-top-right-radius: 0;
  border-bottom-right-radius: 0;
}

.bare {
  display: flex;
  padding: 0;
  border: 0;
  background: none;
}

/* Filters */
.filters {
  display: flex;
  align-items: flex-start;
  gap: 8px;
  padding: 11px 12px 10px 10px;
}
.fields {
  display: flex;
  flex: 1;
  flex-wrap: wrap;
  gap: 8px;
}
.actions { display: flex; gap: 8px; }
.refresh.big { width: 211px; gap: 14px; }

.field {
  display: flex;
  align-items: center;
  height: 56px;
  border: 2px solid #d9d9d9;
  border-radius: 12px;
  background: #fff;
  overflow: hidden;
}
.field .pre, .field .post {
  display: grid;
  place-items: center;
  flex: none;
  width: 36px;
  height: 100%;
  padding: 0;
  border: 0;
  border-right: 2px solid #d9d9d9;
  background: #fafafa;
  font-size: 22px;
}
.field .post { width: 34px; border-right: 0; border-left: 2px solid #d9d9d9; }
.field input, .field select {
  width: 100%;
  min-width: 0;
  padding: 0;
  border: 0;
  background: none;
  outline: 0;
  appearance: none;
}
.field .one { flex: 1; padding-left: 7px; }
::placeholder { color: #bfbfbf; opacity: 1; }
.w-city { width: 385px; }
.w-tariff { width: 384px; }
.w-preset { width: 281px; }
.w-dates { width: 414px; }
.w-gran { width: 211px; }
.w-week { width: 297px; }
.grow { flex: 1; }

.tag {
  display: flex;
  align-items: center;
  gap: 8px;
  height: 38px;
  margin-left: 7px;
  padding: 0 10px 0 9px;
  border-radius: 6px;
  background: #f0f0f0;
  font-size: 21px;
}
.tag .bare { color: #8c8c8c; }
.clear { margin-left: auto; padding: 0 7px; color: #bfbfbf; }
.clear .ic { width: 22px; height: 22px; }

.two {
  display: flex;
  flex: 1;
  flex-direction: column;
  height: 100%;
  padding: 4px 0 0 8px;
  font-size: 21px;
  line-height: 21px;
}
.two .lab { height: 21px; color: #8c8c8c; white-space: nowrap; }
.two .small { padding-top: 1px; font-size: 18px; }
.two input, .two select { height: 22px; color: #1f1f1f; line-height: 21px; }
.two select.ph { color: #bfbfbf; }
.w-dates .two { padding-left: 11px; }
.w-dates .two + .two { border-left: 2px solid #d9d9d9; }
.w-preset, .w-gran { position: relative; }
.chev {
  position: absolute;
  top: 50%;
  right: 18px;
  color: #b8b8b8;
  transform: translateY(-50%);
  pointer-events: none;
}

/* Two columns */
.cols {
  display: grid;
  flex: 1;
  grid-template-columns: minmax(0, 1fr) minmax(0, 1fr);
  gap: 13px;
  padding-top: 11px;
}
.metric {
  display: flex;
  gap: 8px;
  margin-bottom: 12px;
  padding: 11px 11px 11px 10px;
}
.metric > .btn.big { border-radius: 8px; }

.plot { padding: 11px 11px 11px 10px; }
.plot-head { display: flex; gap: 8px; margin-bottom: 8px; }
.drag { align-items: center; justify-content: center; width: 42px; margin-right: 16px; }
.badged { position: relative; }
.badge {
  position: absolute;
  top: -11px;
  left: -10px;
  width: 24px;
  height: 24px;
  border-radius: 50%;
  background: #1677ff;
  color: #fff;
  font-size: 16px;
  font-weight: 500;
  line-height: 24px;
  text-align: center;
}
.mtext { font-size: 20px; }
.mtext sub { align-self: flex-end; margin-bottom: 4px; font-size: 16px; line-height: 16px; }
.mtext .ic { align-self: flex-end; width: 10px; height: 10px; margin-bottom: 8px; stroke-width: 3; }
.pick { position: relative; width: 144px; justify-content: flex-start; padding-left: 12px; gap: 6px; }
.pick select { width: 100%; padding: 0; border: 0; background: none; appearance: none; outline: 0; }

.chart { display: block; width: 100%; height: auto; }
.chart path, .chart .glyph { stroke-linejoin: round; }
.gridline { fill: none; stroke: #000; stroke-opacity: .12; stroke-width: 2; }
.cur { fill: none; stroke: #1677ff; stroke-width: 4; }
.prev { fill: none; stroke: #4a93f7; stroke-width: 3; stroke-dasharray: 16 6; }
.glyph { fill: none; stroke: #1f1f1f; }
.ticks {
  fill: #777;
  font-family: "Liberation Sans", sans-serif;
  font-size: 18px;
  text-anchor: middle;
}

/* Map */
.map {
  position: relative;
  display: flex;
  flex-direction: column;
  justify-content: space-between;
  margin-top: 2px;
}
.map-art {
  position: absolute;
  top: 34px;
  left: 0;
  width: 100%;
  height: calc(100% - 180px);
}
.map-bar {
  position: relative;
  display: flex;
  gap: 8px;
  padding: 11px 12px 11px 11px;
  border-radius: 14px;
  background: #fff;
}
.size { width: 141px; }
.btn.poly { width: 313px; padding: 0; gap: 12px; }

.zoomer {
  position: absolute;
  top: 495px;
  right: 14px;
  width: 56px;
  border: 2px solid #d9d9d9;
  border-radius: 10px;
  background: #fff;
}
.zoomer button {
  display: grid;
  place-items: center;
  width: 100%;
  height: 53px;
  padding: 0;
  border: 0;
  background: none;
}
.zoomer button + button { border-top: 2px solid #d9d9d9; }
.zoomer .ic { width: 24px; height: 24px; stroke-width: 2; }

.roads { fill: none; stroke-linejoin: round; }
.casing { stroke: #d3d3d3; }
.poi { fill: none; stroke: currentColor; stroke-width: 2; }
.poi.navy { color: #14429a; }
.poi.blue { color: #58a3f0; }

.labels {
  fill: #34373c;
  stroke: #fff;
  stroke-width: 4;
  stroke-linejoin: round;
  paint-order: stroke;
  font-family: "Noto Sans", sans-serif;
  font-size: 20px;
  text-anchor: middle;
}
.labels .s18 { font-size: 18px; }
.labels .s16 { font-size: 16px; }
.labels .start { text-anchor: start; }
.labels .navy { fill: #14429a; font-size: 19px; font-weight: 500; }
.labels .blue { fill: #2b86e6; font-size: 19px; font-weight: 500; }
.labels .teal { fill: #21896e; font-size: 19px; font-weight: 500; }
.labels .violet { fill: #8467f2; font-size: 19px; font-weight: 500; }
.labels .river { fill: #2a6fc0; }
.arena {
  fill: #a9581f;
  font-family: "Noto Sans", sans-serif;
  font-size: 20px;
  font-weight: 500;
  text-anchor: middle;
}

.legend {
  position: relative;
  display: flex;
  gap: 7px;
  padding: 13px 12px 6px 8px;
  border-radius: 14px;
  background: #fff;
}
.legend-main { flex: 1; }
.legend-head { display: flex; align-items: center; }
.legend-title {
  flex: 1;
  padding-left: 4px;
  font-weight: 600;
  line-height: 39px;
}
.wipe {
  display: flex;
  align-items: center;
  gap: 14px;
  margin-right: 22px;
  padding: 0;
  border: 0;
  background: none;
  color: #ff4d4f;
}
.wipe .ic { width: 30px; height: 30px; }
.range {
  position: relative;
  height: 24px;
  margin: 24px 4px 0 0;
  background: linear-gradient(#ec3023, #ec3023) center / calc(100% - 24px) 15px no-repeat;
}
.range input {
  position: absolute;
  inset: 0;
  width: 100%;
  height: 24px;
  margin: 0;
  background: none;
  appearance: none;
  pointer-events: none;
}
.range input::-webkit-slider-runnable-track { height: 24px; background: none; }
.range input::-webkit-slider-thumb {
  width: 24px;
  height: 24px;
  border: 3px solid #91caff;
  border-radius: 50%;
  background: #fff;
  appearance: none;
  pointer-events: auto;
}
.tick {
  position: absolute;
  top: 1px;
  left: 50%;
  width: 8px;
  height: 22px;
  border-radius: 4px;
  background: #1f1f1f;
}
.ends {
  display: flex;
  justify-content: space-between;
  padding: 6px 7px 0 4px;
  line-height: 28px;
}
.legend-tools {
  display: grid;
  grid-template-columns: 42px 42px;
  grid-template-rows: 60px 42px;
  align-content: start;
  gap: 8px;
  padding-top: 17px;
}
.low { align-self: end; }

/* Stamp laid over the top right corner */
.stamp {
  position: absolute;
  top: 0;
  right: 0;
  width: 94px;
  height: 84px;
  opacity: .85;
  pointer-events: none;
}
.ring { font-size: 14px; }
.ring.end { text-anchor: end; }
.nda { font-size: 42px; font-weight: 800; }
```
